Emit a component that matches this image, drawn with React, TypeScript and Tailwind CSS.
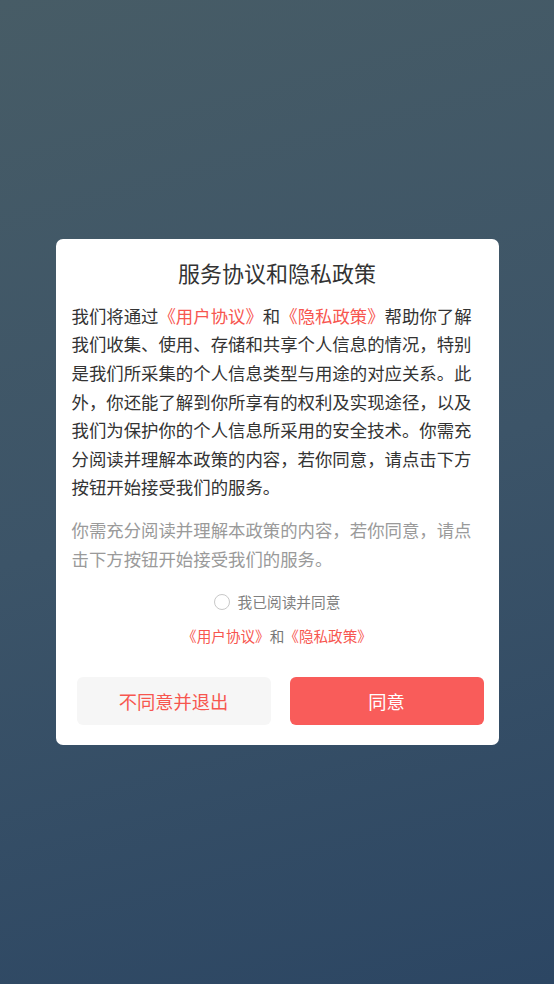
import { useState } from "react";

const font = { fontFamily: '"Noto Sans CJK SC", "Noto Sans", sans-serif' };

export default function App() {
  const [checked, setChecked] = useState(false);

  return (
    <div
      style={font}
      className="flex min-h-[984px] w-full items-center justify-center bg-[linear-gradient(165deg,#475c66_0%,#3c5468_50%,#2c4663_100%)]"
    >
      <div className="flex w-[443px] flex-col rounded-[7px] bg-white pt-[17px] pb-[20px]">
        <h1 className="text-center text-[22px] leading-[32px] font-normal text-[#333333]">
          服务协议和隐私政策
        </h1>

        <p className="mt-[14px] px-[16px] text-[17.4px] leading-[28.6px] text-[#333333]">
          我们将通过<span className="text-[#f7564f]">《用户协议》</span>和
          <span className="text-[#f7564f]">《隐私政策》</span>
          帮助你了解我们收集、使用、存储和共享个人信息的情况，特别是我们所采集的个人信息类型与用途的对应关系。此外，你还能了解到你所享有的权利及实现途径，以及我们为保护你的个人信息所采用的安全技术。你需充分阅读并理解本政策的内容，若你同意，请点击下方按钮开始接受我们的服务。
        </p>

        <p className="mt-[14.5px] px-[16px] text-[17.4px] leading-[28.4px] text-[#9a9a9a]">
          你需充分阅读并理解本政策的内容，若你同意，请点击下方按钮开始接受我们的服务。
        </p>

        <button
          type="button"
          onClick={() => setChecked(!checked)}
          className="mt-[17px] flex h-[24px] items-center justify-center gap-[8px]"
        >
          <span
            className={`h-[16px] w-[16px] rounded-full border ${
              checked ? "border-[#f95c5a] bg-[#f95c5a]" : "border-[#c8c8c8] bg-white"
            }`}
          />
          <span className="text-[14.7px] text-[#808080]">我已阅读并同意</span>
        </button>

        <div className="mt-[10.5px] text-center text-[14.6px] leading-[22px] text-[#777777]">
          <span className="text-[#f7564f]">《用户协议》</span>和
          <span className="text-[#f7564f]">《隐私政策》</span>
        </div>

        <div className="mt-[30.5px] flex gap-[19px] pr-[15px] pl-[21px]">
          <button
            type="button"
            className="h-[48px] flex-1 rounded-[6px] bg-[#f6f6f6] text-[18.3px] text-[#f7564f]"
          >
            不同意并退出
          </button>
          <button
            type="button"
            className="h-[48px] flex-1 rounded-[6px] bg-[#f95c5a] text-[18.3px] text-white"
          >
            同意
          </button>
        </div>
      </div>
    </div>
  );
}
